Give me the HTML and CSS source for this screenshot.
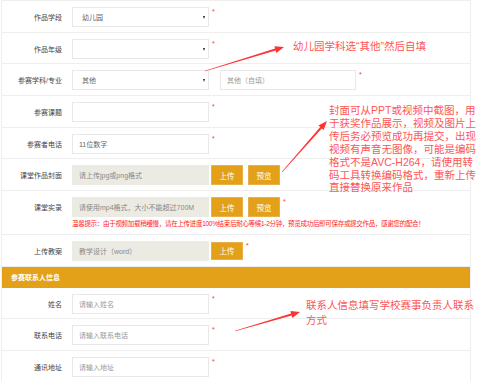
FILE: index.html
```html
<!DOCTYPE html>
<html lang="en">

<head>
    <meta charset="UTF-8">
    <title>作品信息</title>
    <link rel="stylesheet" href="styles.css">
</head>

<body>
    <div class="form">
        <!-- Work info -->
        <div class="row">
            <div class="label">作品学段</div>
            <div class="field select">幼儿园</div>
            <span class="req">*</span>
        </div>
        <div class="row">
            <div class="label">作品年级</div>
            <div class="field select"></div>
            <span class="req">*</span>
        </div>
        <div class="row">
            <div class="label">参赛学科/专业</div>
            <div class="field select">其他</div>
            <div class="field ph other">其他（自填）</div>
            <span class="req">*</span>
        </div>
        <div class="row">
            <div class="label">参赛课题</div>
            <div class="field"></div>
            <span class="req">*</span>
        </div>
        <div class="row">
            <div class="label">参赛者电话</div>
            <div class="field">11位数字</div>
            <span class="req">*</span>
        </div>
        <div class="row">
            <div class="label">课堂作品封面</div>
            <div class="field file">请上传jpg或png格式</div>
            <div class="btn">上传</div>
            <div class="btn preview">预览</div>
        </div>
        <div class="row tall">
            <div class="row-main">
                <div class="label">课堂实录</div>
                <div class="field file">请使用mp4格式，大小不能超过700M</div>
                <div class="btn">上传</div>
                <div class="btn preview">预览</div>
                <span class="req">*</span>
            </div>
            <div class="tip">温馨提示：由于视频加载稍缓慢，请在上传进度100%结束后耐心等候1-2分钟，预览成功后即可保存或提交作品，感谢您的配合！</div>
        </div>
        <div class="row">
            <div class="label">上传教案</div>
            <div class="field file">教学设计（word）</div>
            <div class="btn short">上传</div>
            <span class="req">*</span>
        </div>

        <!-- Contact info -->
        <div class="section">参赛联系人信息</div>
        <div class="row">
            <div class="label">姓名</div>
            <div class="field ph">请输入姓名</div>
            <span class="req">*</span>
        </div>
        <div class="row">
            <div class="label">联系电话</div>
            <div class="field ph">请输入联系电话</div>
            <span class="req">*</span>
        </div>
        <div class="row">
            <div class="label">通讯地址</div>
            <div class="field ph">请输入地址</div>
            <span class="req">*</span>
        </div>
    </div>

    <!-- Annotations drawn over the form -->
    <div class="note note-subject">幼儿园学科选“其他”然后自填</div>
    <div class="note note-cover">封面可从PPT或视频中截图，用<br>于获奖作品展示，视频及图片上<br>传后务必预览成功再提交，出现<br>视频有声音无图像，可能是编码<br>格式不是AVC-H264，请使用转<br>码工具转换编码格式，重新上传<br>直接替换原来作品</div>
    <div class="note note-contact">联系人信息填写学校赛事负责人联系<br>方式</div>

    <svg class="arrows" width="482" height="381" viewBox="0 0 482 381">
        <polygon points="204.9,70.7 275.1,48.6 274.4,46.3 284,47 276.4,53.0 275.7,50.6 205.1,71.3" />
        <polygon points="281.8,171.8 320.25,127.1 318.4,125.4 327,121 323.6,130.1 321.75,128.4 282.2,172.2" />
        <polygon points="234.9,330.7 291.1,313.5 290.4,311.1 300,312 292.4,317.9 291.7,315.5 235.1,331.3" />
    </svg>
</body>

</html>
```

FILE: styles.css
```css
/* General styles */
body {
    margin: 0;
    font-family: "Liberation Sans", "Noto Sans CJK SC", sans-serif;
    background: #fff;
    position: relative;
    width: 482px;
    height: 381px;
    overflow: hidden;
}

.form {
    margin-left: 1px;
    width: 470px;
    box-sizing: border-box;
    border: 1px solid #eee;
    border-bottom: none;
}

/* Rows */
.row {
    display: flex;
    align-items: center;
    padding: 6px 0 4.7px;
    border-bottom: 1px solid #eee;
}

.row.tall {
    flex-direction: column;
    align-items: stretch;
}

.row-main {
    display: flex;
    align-items: center;
}

.label {
    width: 60px;
    margin-right: 10px;
    text-align: right;
    font-size: 7px;
    color: #444;
    white-space: nowrap;
}

.req {
    align-self: flex-start;
    margin: 1px 0 0 3px;
    font-size: 7px;
    line-height: 7px;
    color: #f33;
}

/* Inputs */
.field {
    width: 137px;
    height: 20px;
    box-sizing: border-box;
    border: 1px solid #e8e8e8;
    padding: 0 6px;
    display: flex;
    align-items: center;
    font-size: 7px;
    color: #666;
    white-space: nowrap;
}

.field.ph {
    color: #999;
}

.field.other {
    width: 136px;
    margin-left: 11px;
}

.field.file {
    background: #ebebe4;
    border-color: #ebebe4;
    color: #888;
}

.select {
    position: relative;
    padding-left: 9px;
}

.select::after {
    content: "";
    position: absolute;
    right: 3px;
    top: 8px;
    border-left: 1.5px solid transparent;
    border-right: 1.5px solid transparent;
    border-top: 3px solid #222;
}

/* Buttons */
.btn {
    width: 32px;
    height: 20px;
    box-sizing: border-box;
    margin-left: 2px;
    background: #e3a11a;
    border: 1px solid #e9b04a;
    color: #fff;
    font-size: 7.5px;
    display: flex;
    align-items: center;
    justify-content: center;
}

.btn.preview {
    margin-left: 5px;
}

.btn.short {
    height: 18px;
}

.tip {
    margin: 2px 0 0 70px;
    font-size: 6.5px;
    letter-spacing: -0.3px;
    line-height: 10px;
    color: #f22;
    white-space: nowrap;
}

/* Section header */
.section {
    height: 21px;
    display: flex;
    align-items: center;
    padding-left: 9px;
    background: #e3a11a;
    color: #fff;
    font-size: 7px;
    font-weight: bold;
}

/* Annotations */
.note {
    position: absolute;
    color: #f55;
    font-size: 10.5px;
    white-space: nowrap;
}

.note-subject {
    left: 293px;
    top: 40px;
    line-height: 13px;
}

.note-cover {
    left: 329px;
    top: 104px;
    line-height: 12.9px;
}

.note-contact {
    left: 306px;
    top: 298px;
    line-height: 15.3px;
}

.arrows {
    position: absolute;
    left: 0;
    top: 0;
    pointer-events: none;
    fill: #f33;
}
```
